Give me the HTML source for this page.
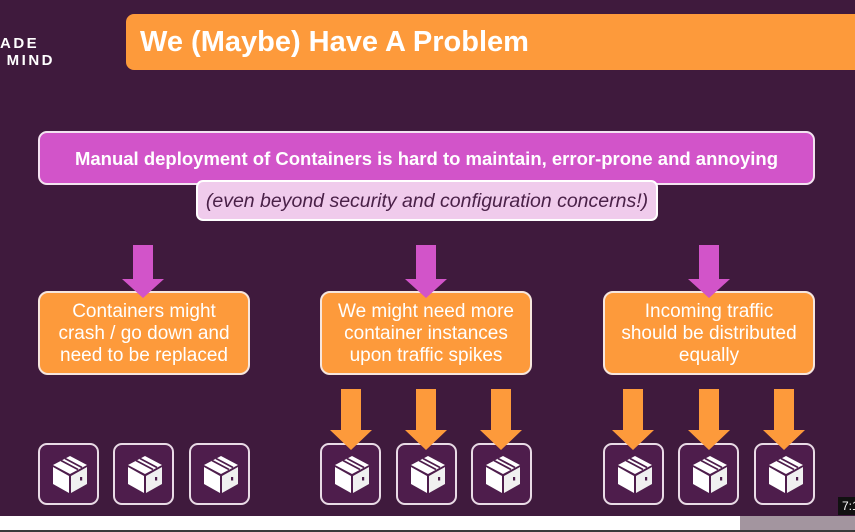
<!DOCTYPE html>
<html><head><style>
body{margin:0;width:855px;height:532px;background:#3f1a3d;position:relative;overflow:hidden;font-family:"Liberation Sans",sans-serif}
.a{position:absolute}
.logo{left:0;top:35px;color:#fff;font-weight:bold;font-size:15px;letter-spacing:2.5px;line-height:17px}
.title{left:126px;top:14px;width:740px;height:56px;background:#fd9a3b;border-radius:8px;color:#fff;font-weight:bold;font-size:29px;line-height:56px;padding-left:14px;box-sizing:border-box}
.main{left:38px;top:131px;width:777px;height:54px;background:#d254c9;border:2px solid #f3e3f0;border-radius:9px;box-sizing:border-box;color:#fff;font-weight:bold;font-size:18.5px;text-align:center;line-height:52px}
.sub{left:196px;top:180px;width:462px;height:41px;background:#f0cbec;border:2px solid #fff;border-radius:7px;box-sizing:border-box;color:#4a2148;font-style:italic;font-size:19.5px;text-align:center;line-height:38px}
.ob{top:291px;width:212px;height:84px;background:#fd9a3b;border:2px solid #f6e6de;border-radius:10px;box-sizing:border-box;color:#fff;font-size:19px;text-align:center;line-height:22px;padding-top:8px;white-space:nowrap}
.cb{top:443px;width:61px;height:62px;background:#4e1d4c;border:2px solid #e9dbe6;border-radius:9px;box-sizing:border-box}
.cb svg{position:absolute;left:11px;top:10px}
</style></head><body>
<div class="a logo">ADE<br>&nbsp;MIND</div>
<div class="a title">We (Maybe) Have A Problem</div>
<div class="a main">Manual deployment of Containers is hard to maintain, error-prone and annoying</div>
<div class="a sub">(even beyond security and configuration concerns!)</div>

<div class="a ob" style="left:38px">Containers might<br>crash / go down and<br>need to be replaced</div>
<div class="a ob" style="left:320px">We might need more<br>container instances<br>upon traffic spikes</div>
<div class="a ob" style="left:603px">Incoming traffic<br>should be distributed<br>equally</div>

<svg width="0" height="0" style="position:absolute"><defs>
<g id="cube">
<polygon points="19,1 36,10 19,19 2,10" fill="#fff"/>
<polygon points="2,12 18,21 18,38 2,29" fill="#fff"/>
<polygon points="20,21 36,12 36,29 20,38" fill="#f0f0f0"/>
<path d="M10,5.5 L27,14.5 M14,3.5 L31,12.5" stroke="#4e1d4c" stroke-width="1.8"/>
<rect x="29" y="22" width="2.2" height="3.5" fill="#4e1d4c"/>
</g></defs></svg>

<div class="a cb" style="left:38px"><svg width="38" height="40"><use href="#cube"/></svg></div>
<div class="a cb" style="left:113px"><svg width="38" height="40"><use href="#cube"/></svg></div>
<div class="a cb" style="left:189px"><svg width="38" height="40"><use href="#cube"/></svg></div>
<div class="a cb" style="left:320px"><svg width="38" height="40"><use href="#cube"/></svg></div>
<div class="a cb" style="left:396px"><svg width="38" height="40"><use href="#cube"/></svg></div>
<div class="a cb" style="left:471px"><svg width="38" height="40"><use href="#cube"/></svg></div>
<div class="a cb" style="left:603px"><svg width="38" height="40"><use href="#cube"/></svg></div>
<div class="a cb" style="left:678px"><svg width="38" height="40"><use href="#cube"/></svg></div>
<div class="a cb" style="left:754px"><svg width="38" height="40"><use href="#cube"/></svg></div>

<svg class="a" style="left:0;top:0" width="855" height="532">
<defs>
<polygon id="pa" points="-10,0 10,0 10,34 21,34 0,53 -21,34 -10,34" />
<polygon id="oa" points="-10,0 10,0 10,41 21,41 0,61 -21,41 -10,41" />
</defs>
<g fill="#d254c9"><use href="#pa" x="143" y="245"/><use href="#pa" x="426" y="245"/><use href="#pa" x="709" y="245"/></g>
<g fill="#fd9a3b"><use href="#oa" x="351" y="389"/><use href="#oa" x="426" y="389"/><use href="#oa" x="501" y="389"/><use href="#oa" x="633" y="389"/><use href="#oa" x="709" y="389"/><use href="#oa" x="784" y="389"/></g>
</svg>

<div class="a" style="left:838px;top:497px;width:20px;height:18px;background:#111;color:#fff;font-size:12px;line-height:18px;padding-left:4px">7:1</div>
<div class="a" style="left:0;top:516px;width:740px;height:14px;background:#fff"></div>
<div class="a" style="left:740px;top:516px;width:115px;height:14px;background:#a3959f"></div>
<div class="a" style="left:0;top:530px;width:855px;height:2px;background:#3a3a3a"></div>
</body></html>
